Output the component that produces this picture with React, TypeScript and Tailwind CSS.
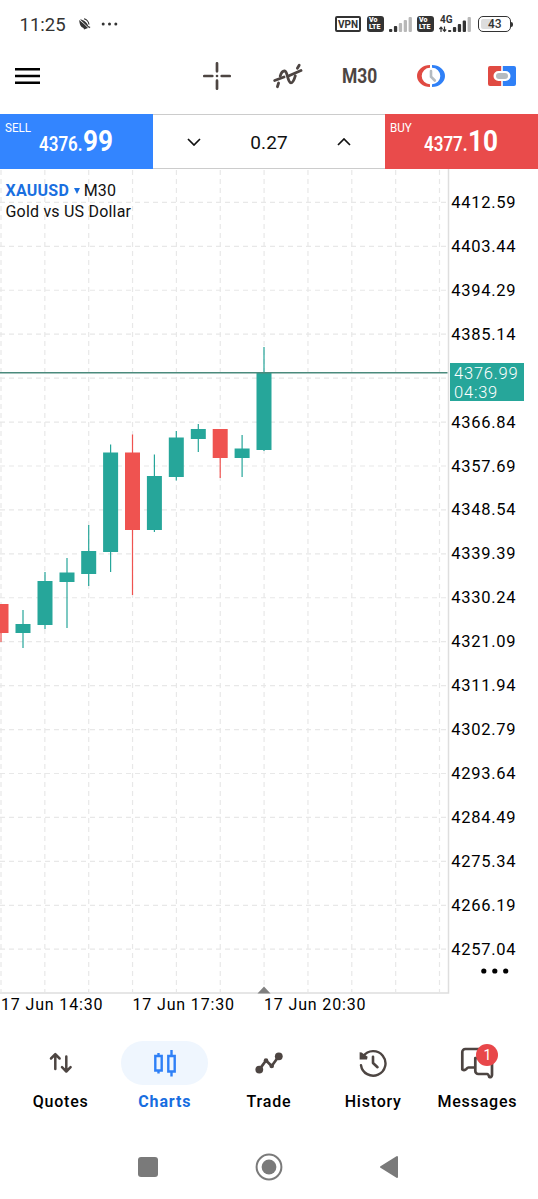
import type { ReactNode } from 'react';

interface Candle {
  x: number;
  high: number;
  top: number;
  bottom: number;
  low: number;
  up: boolean;
}

const UP = '#26a69a';
const DOWN = '#ef5350';

// y values are pixels from the top of the chart area
const candles: Candle[] = [
  { x: 1, high: 435, top: 435, bottom: 464, low: 473, up: false },
  { x: 23, high: 441, top: 455, bottom: 464, low: 479, up: true },
  { x: 45, high: 403, top: 412, bottom: 456, low: 460, up: true },
  { x: 67, high: 389, top: 403.5, bottom: 413, low: 459, up: true },
  { x: 88.7, high: 356, top: 382, bottom: 405, low: 417, up: true },
  { x: 110.6, high: 275.5, top: 283.5, bottom: 383, low: 403, up: true },
  { x: 132.5, high: 265.5, top: 283.5, bottom: 361, low: 426, up: false },
  { x: 154.4, high: 285.5, top: 307, bottom: 361, low: 363, up: true },
  { x: 176.3, high: 262, top: 268.5, bottom: 308, low: 311.5, up: true },
  { x: 198.3, high: 255, top: 260, bottom: 270, low: 283, up: true },
  { x: 220.2, high: 260, top: 260, bottom: 289, low: 309, up: false },
  { x: 242.1, high: 266, top: 279.5, bottom: 289, low: 308, up: true },
  { x: 264, high: 178, top: 204, bottom: 281, low: 282, up: true },
];

const prices = [
  '4412.59', '4403.44', '4394.29', '4385.14', '', '4366.84',
  '4357.69', '4348.54', '4339.39', '4330.24', '4321.09', '4311.94',
  '4302.79', '4293.64', '4284.49', '4275.34', '4266.19', '4257.04',
];

const columns = Array.from({ length: 11 }, (_, i) => 1 + i * 43.85);
const rows = Array.from({ length: 18 }, (_, i) => 33.4 + i * 43.93);

const VolteBadge = () => (
  <div className="w-[17px] h-[16px] rounded-[3px] bg-[#333] text-white text-[7px] leading-[7px] font-black pt-px pl-[2px]">
    <div>Vo</div>
    <div>LTE</div>
  </div>
);

const SignalBars = ({ active }: { active: number }) => (
  <svg width="23" height="16" viewBox="0 0 23 16">
    {[3, 6, 9, 12, 15].map((h, i) => (
      <rect key={h} x={i * 4.9} y={16 - h} width="3.3" height={h} rx="1" fill={i < active ? '#333' : '#b8b8b8'} />
    ))}
  </svg>
);

const StatusBar = () => (
  <div className="h-12 flex items-center pl-[19.5px] pr-[25px] text-[#333]">
    <span className="text-[18.5px] pt-[2px] w-[46px] leading-none">11:25</span>
    <svg className="ml-[12px]" width="13" height="13" viewBox="0 0 13 13">
      <path d="M1.2 2 C1.5 6 2.5 9 5.5 10 L6 11.5 L10 10 L6.5 6.5Z" fill="#333" />
      <path d="M2 1.5 C5 1.5 9 4 10.2 8 L12.5 9 L11.3 10.3Z" fill="#333" />
      <path d="M6 .8 C8.5 1.5 10.5 3.5 11 6.5" fill="none" stroke="#333" strokeWidth="1.1" />
    </svg>
    <svg className="ml-[10.5px]" width="17" height="4" viewBox="0 0 17 4">
      <circle cx="2.2" cy="2" r="1.5" fill="#333" />
      <circle cx="8.5" cy="2" r="1.5" fill="#333" />
      <circle cx="14.8" cy="2" r="1.5" fill="#333" />
    </svg>
    <div className="ml-auto flex items-center">
      <div className="w-[26px] h-[16px] border-2 border-[#333] rounded-[2px] text-[10px] font-bold leading-[13px] text-center">VPN</div>
      <div className="ml-[6px]"><VolteBadge /></div>
      <div className="ml-[5px]"><SignalBars active={2} /></div>
      <div className="ml-[5px]"><VolteBadge /></div>
      <svg className="ml-[5px]" width="33" height="18" viewBox="0 0 33 18">
        <text x="1" y="8" fontSize="10" fontWeight="700" fill="#333" fontFamily="Roboto">4G</text>
        <path d="M2 17V12.5M.3 14 2 12.2 3.5 14M5.5 11.5V16M3.8 14.5 5.5 16.3 7.2 14.5" fill="none" stroke="#333" strokeWidth="1.2" />
        {[2, 5, 8, 11.5, 15].map((h, i) => (
          <rect key={h} x={9 + i * 4.9} y={17 - h} width="3.3" height={h} rx="1" fill={i < 4 ? '#333' : '#b8b8b8'} />
        ))}
      </svg>
      <div className="ml-[6px] w-[33px] h-[16px] border-[1.5px] border-[#333] rounded-[5px] p-[2px] flex">
        <div className="w-[12px] bg-[#ddd] rounded-l-[2px]" />
        <span className="text-[12px] leading-[10px] -ml-[5px] font-medium">43</span>
      </div>
      <div className="w-[2px] h-[5px] bg-[#333] rounded-r" />
    </div>
  </div>
);

const Toolbar = () => (
  <div className="h-[56px] mb-[10px] flex items-center pl-[15px] pr-[22px]">
    <svg width="25" height="18" viewBox="0 0 25 18">
      <path d="M0 2.2H25M0 9H25M0 15.8H25" stroke="#000" strokeWidth="2.6" />
    </svg>
    <svg className="ml-[163px]" width="28" height="28" viewBox="0 0 28 28">
      <path d="M14 1.3V9.3M14 18.7V26.7M1.3 14H9.3M18.7 14H26.7" stroke="#4d4542" strokeWidth="2.7" strokeLinecap="round" />
      <circle cx="14" cy="14" r="1.3" fill="#4d4542" />
    </svg>
    <svg className="ml-[42px]" width="30" height="26" viewBox="0 0 30 26">
      <g fill="none" stroke="#4d4542" strokeWidth="2.8" strokeLinecap="round">
        <path d="M1.7 17.5 11 14M16 12.7 28 7.5" />
        <path d="M4.4 23.7 5.6 20M7.2 13.2 C8.2 9.8 9.6 7.8 11.6 8 C15 8.4 14.2 19.6 18 19.8 C20.2 19.8 21.2 16.5 22.3 12.8M24.4 5.3 26.2 2.2" />
      </g>
    </svg>
    <span className="ml-[38.5px] w-[36px] text-[21px] font-bold text-[#4d4542] leading-none whitespace-nowrap">
      <span className="inline-block origin-left scale-x-[0.83]">M30</span>
    </span>
    <svg className="ml-[39.5px]" width="28" height="24" viewBox="0 0 28 24">
      <path d="M13 1A13 11 0 0 0 13 23V20.3A8.3 8.3 0 0 1 13 3.7Z" fill="#e04a42" />
      <path d="M15 1A13 11 0 0 1 15 23V20.3A8.3 8.3 0 0 0 15 3.7Z" fill="#2f80f7" />
      <path d="M14 7V12.7L17.8 16.5" fill="none" stroke="#b5bbc0" strokeWidth="2.6" strokeLinecap="round" />
    </svg>
    <svg className="ml-auto" width="28" height="20" viewBox="0 0 28 20">
      <path d="M2 0H13.2V5H10.5A5 5 0 0 0 10.5 15H13.2V20H2A2 2 0 0 1 0 18V2A2 2 0 0 1 2 0Z" fill="#e04a42" />
      <path d="M14.8 0H26A2 2 0 0 1 28 2V18A2 2 0 0 1 26 20H14.8V15H17.5A5 5 0 0 0 17.5 5H14.8Z" fill="#2f80f7" />
      <rect x="8" y="7" width="12" height="6" rx="3" fill="#b5bbc0" />
    </svg>
  </div>
);

interface QuoteButtonProps {
  label: string;
  base: string;
  pips: string;
  className: string;
}

const QuoteButton = ({ label, base, pips, className }: QuoteButtonProps) => (
  <button className={`w-[153px] h-[55px] flex flex-col text-white text-left pl-[5px] pt-[6px] ${className}`}>
    <div className="w-[30px] text-[13.5px] leading-[14px] origin-left scale-x-[0.86]">{label}</div>
    <div className="flex items-baseline -mt-[9px] pl-[34px] leading-[32px] whitespace-nowrap">
      <span className="w-[43.5px] text-[19.5px] font-semibold"><span className="inline-block origin-left scale-x-[0.87]">{base}</span></span>
      <span className="text-[29px] font-bold origin-left inline-block scale-x-[0.9]">{pips}</span>
    </div>
  </button>
);

const TradePanel = () => (
  <div className="h-[55px] flex">
    <QuoteButton label="SELL" base="4376." pips="99" className="bg-[#3385ff]" />
    <div className="flex-1 flex items-center justify-between border-y border-[#ccc] px-[34px]">
      <svg width="14" height="8" viewBox="0 0 14 8"><path d="M1 1 7 7 13 1" fill="none" stroke="#111" strokeWidth="1.7" /></svg>
      <span className="pt-px text-[19px] text-[#111] leading-none tracking-[0.1px]">0.27</span>
      <svg width="14" height="8" viewBox="0 0 14 8"><path d="M1 7 7 1 13 7" fill="none" stroke="#111" strokeWidth="1.7" /></svg>
    </div>
    <QuoteButton label="BUY" base="4377." pips="10" className="bg-[#e94b4b]" />
  </div>
);

const Chart = () => (
  <div className="h-[825px] flex">
    <div className="relative w-[450px] h-[825px]">
      <svg width="450" height="825" viewBox="0 0 450 825">
        <g stroke="#e8e8e8" strokeWidth="1.2" strokeDasharray="5 4">
          {columns.map((x) => <line key={x} x1={x} x2={x} y1="1" y2="823" />)}
          {rows.map((y) => <line key={y} x1="0" x2="448" y1={y} y2={y} />)}
        </g>
        <path d="M0 824H448.5V0" fill="none" stroke="#dedede" strokeWidth="1.5" />
        {candles.map((c) => (
          <g key={c.x} fill={c.up ? UP : DOWN}>
            <rect x={c.x - 0.6} y={c.high} width="1.2" height={c.low - c.high} />
            <rect x={c.x - 7.5} y={c.top} width="15" height={c.bottom - c.top} />
          </g>
        ))}
        <path d="M0 203.8H447.5" stroke="#4b8a7c" strokeWidth="1.4" />
        <path d="M257.5 824.5 264 817.5 270.5 824.5Z" fill="#808080" />
      </svg>
      <div className="absolute left-[5.5px] top-[11px] text-[16px] leading-[21px] text-[#111] whitespace-nowrap">
        <div className="flex items-center">
          <span className="font-bold text-[#1a6fe0] tracking-[0.25px]">XAUUSD</span>
          <svg className="ml-[4.5px] mr-[4px]" width="6" height="6" viewBox="0 0 6 6"><path d="M0 0H6L3 6Z" fill="#1a6fe0" /></svg>
          <span className="tracking-[0.2px]">M30</span>
        </div>
        <div className="tracking-[0.2px]">Gold vs US Dollar</div>
      </div>
    </div>
    <div className="relative flex-1 pt-[12px] pl-[1.3px]">
      {prices.map((price, i) => (
        <div key={i} className="h-[43.93px] text-[16.5px] leading-[44px] tracking-[0.7px] text-black">{price}</div>
      ))}
      <div className="absolute left-0 top-[194px] w-[74px] h-[38px] bg-[#26a69a] text-white text-[16.5px] leading-[19px] tracking-[0.8px] pl-[4px] pt-px font-light">
        <div>4376.99</div>
        <div>04:39</div>
      </div>
      <svg className="absolute left-[31px] top-[799px]" width="28" height="6" viewBox="0 0 28 6">
        <circle cx="2.8" cy="3" r="2.6" />
        <circle cx="13.8" cy="3" r="2.6" />
        <circle cx="24.7" cy="3" r="2.6" />
      </svg>
    </div>
  </div>
);

const QuotesIcon = () => (
  <svg width="24" height="22" viewBox="0 0 24 22">
    <path d="M6.3 17V2.8M2 6.5 6.3 2.2 10.6 6.5M17.3 4.5V18.8M13 15.2 17.3 19.5 21.6 15.2" fill="none" stroke="#4d4542" strokeWidth="2.5" strokeLinecap="round" strokeLinejoin="round" />
  </svg>
);

const ChartsIcon = () => (
  <svg width="24" height="28" viewBox="0 0 24 28">
    <path d="M2.3 7H8.7V21.5H2.3ZM5.5 7V4M5.5 21.5V24.5M15.3 7H21.7V22.5H15.3ZM18.5 7V1M18.5 22.5V27.5" fill="none" stroke="#2f80f7" strokeWidth="2.4" />
  </svg>
);

const TradeIcon = () => (
  <svg width="28" height="22" viewBox="0 0 28 22">
    <path d="M4.3 17.6 11 8.5 16.7 14 23.8 4.3" fill="none" stroke="#4d4542" strokeWidth="2.7" strokeLinejoin="round" />
    <circle cx="4.3" cy="17.6" r="3.9" fill="#4d4542" />
    <circle cx="11" cy="8.5" r="2.3" fill="#4d4542" />
    <circle cx="16.7" cy="14" r="2.3" fill="#4d4542" />
    <circle cx="23.8" cy="4.3" r="3.9" fill="#4d4542" />
  </svg>
);

const HistoryIcon = () => (
  <svg width="28" height="28" viewBox="0 0 28 28">
    <g fill="none" stroke="#4d4542" strokeWidth="2.4" strokeLinecap="round" strokeLinejoin="round">
      <path d="M4.2 7.2A12.3 12.3 0 1 1 2 16.2" />
      <path d="M14 7.8V14L18.5 18.2" strokeWidth="2.6" />
    </g>
    <path d="M.6 3.2 2.6 3.4 8.6 7.8 8 10.4H.6Z" fill="#4d4542" />
  </svg>
);

const MessagesIcon = () => (
  <div className="relative">
    <svg width="34" height="32" viewBox="0 0 34 32">
      <g fill="none" stroke="#4d4542" strokeWidth="2.7" strokeLinejoin="round">
        <path d="M14.5 20.5H8.5Q7.5 20.5 6.5 21.8Q4.5 24 2.3 22.5V5A3 3 0 0 1 5.3 2H28V10" />
        <path d="M15.3 11H32V28Q31.5 30.8 29.3 30Q28.3 27 27.2 27H18.3A3 3 0 0 1 15.3 24Z" />
      </g>
    </svg>
    <span className="absolute -top-[3px] left-[16px] size-[22px] rounded-full bg-[#e8474a] text-white text-[14px] leading-[23px] text-center">1</span>
  </div>
);

interface TabProps {
  label: string;
  active?: boolean;
  children: ReactNode;
}

const Tab = ({ label, active, children }: TabProps) => (
  <button className="w-[104.2px] flex flex-col items-center">
    <div className={`w-[87px] h-[44px] rounded-full flex items-center justify-center ${active ? 'bg-[#eff6fe]' : ''}`}>{children}</div>
    <span className={`mt-[7px] text-[16px] leading-[20px] ${active ? 'font-bold text-[#176de0] tracking-[0.9px]' : 'font-medium text-black tracking-[0.8px]'}`}>{label}</span>
  </button>
);

const App = () => {
  return (
    <div className="w-[538px] h-[1199px] bg-white font-['Roboto',sans-serif] flex flex-col overflow-hidden">
      <StatusBar />
      <Toolbar />
      <TradePanel />
      <Chart />
      <div className="h-[47px] flex pt-px pl-px text-[16px] leading-[20px] tracking-[0.85px] text-black whitespace-nowrap">
        <span className="w-[131.5px]">17 Jun 14:30</span>
        <span className="w-[131.5px]">17 Jun 17:30</span>
        <span>17 Jun 20:30</span>
      </div>
      <div className="h-[99px] flex justify-center">
        <Tab label="Quotes"><QuotesIcon /></Tab>
        <Tab label="Charts" active><ChartsIcon /></Tab>
        <Tab label="Trade"><TradeIcon /></Tab>
        <Tab label="History"><HistoryIcon /></Tab>
        <Tab label="Messages"><MessagesIcon /></Tab>
      </div>
      <div className="flex items-center pl-[138px] pt-[13px]">
        <div className="size-[20px] rounded-[3px] bg-[#7a7a7a]" />
        <svg className="ml-[96.5px]" width="28" height="28" viewBox="0 0 28 28">
          <circle cx="14" cy="14" r="12.4" fill="none" stroke="#7a7a7a" strokeWidth="2" />
          <circle cx="14" cy="14" r="7.4" fill="#7a7a7a" />
        </svg>
        <svg className="ml-[96px]" width="20" height="24" viewBox="0 0 20 24">
          <path d="M2 12 18 2V22Z" fill="#7a7a7a" stroke="#7a7a7a" strokeWidth="2" strokeLinejoin="round" />
        </svg>
      </div>
    </div>
  );
};

export default App;
